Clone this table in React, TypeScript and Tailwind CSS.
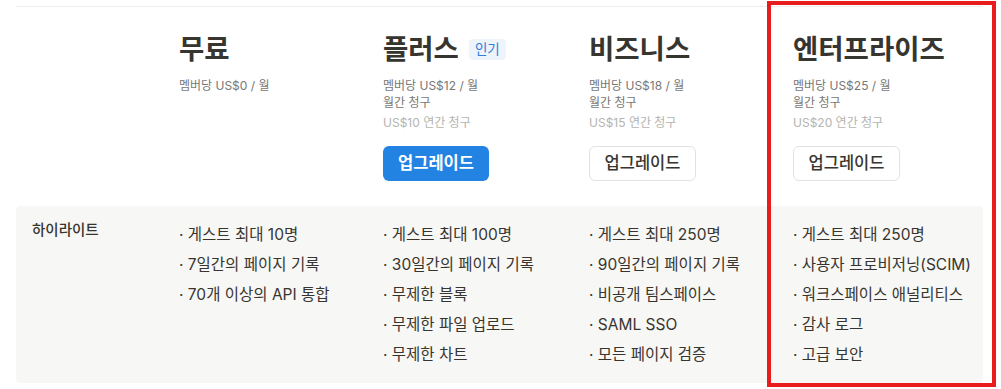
import React from "react";

type Plan = {
  name: string;
  badge?: string;
  price: string;
  monthly?: string;
  annual?: string;
  button?: "primary" | "outline";
  features: string[];
};

const plans: Plan[] = [
  {
    name: "무료",
    price: "멤버당 US$0 / 월",
    features: ["게스트 최대 10명", "7일간의 페이지 기록", "70개 이상의 API 통합"],
  },
  {
    name: "플러스",
    badge: "인기",
    price: "멤버당 US$12 / 월",
    monthly: "월간 청구",
    annual: "US$10 연간 청구",
    button: "primary",
    features: [
      "게스트 최대 100명",
      "30일간의 페이지 기록",
      "무제한 블록",
      "무제한 파일 업로드",
      "무제한 차트",
    ],
  },
  {
    name: "비즈니스",
    price: "멤버당 US$18 / 월",
    monthly: "월간 청구",
    annual: "US$15 연간 청구",
    button: "outline",
    features: [
      "게스트 최대 250명",
      "90일간의 페이지 기록",
      "비공개 팀스페이스",
      "SAML SSO",
      "모든 페이지 검증",
    ],
  },
  {
    name: "엔터프라이즈",
    price: "멤버당 US$25 / 월",
    monthly: "월간 청구",
    annual: "US$20 연간 청구",
    button: "outline",
    features: [
      "게스트 최대 250명",
      "사용자 프로비저닝(SCIM)",
      "워크스페이스 애널리티스",
      "감사 로그",
      "고급 보안",
    ],
  },
];

const cols = "grid grid-cols-[163px_204px_206px_204px_1fr]";

function PlanHeader({ plan }: { plan: Plan }) {
  return (
    <div className="flex flex-col">
      <div className="flex items-center gap-[10px]">
        <h2 className="text-[27.5px] leading-[32px] font-bold text-[#37352f]">{plan.name}</h2>
        {plan.badge && (
          <span className="mt-[1px] rounded-[4px] bg-[#edf4fc] px-[6px] text-[13.5px] leading-[21px] text-[#2f7fd9]">
            {plan.badge}
          </span>
        )}
      </div>
      <div className="mt-[12px] text-[12px] leading-[17px] text-[#787774]">
        <div>{plan.price}</div>
        {plan.monthly && <div>{plan.monthly}</div>}
      </div>
      {plan.annual && (
        <div className="mt-[3px] text-[12px] leading-[17px] text-[#b4b4b0]">{plan.annual}</div>
      )}
      {plan.button === "primary" && (
        <button className="mt-[15px] h-[35px] w-[106px] rounded-[6px] bg-[#2383e2] text-[16.5px] font-semibold text-white">
          업그레이드
        </button>
      )}
      {plan.button === "outline" && (
        <button className="mt-[15px] h-[35px] w-[107px] rounded-[6px] border border-[#e3e2e0] bg-white text-[16.5px] font-medium text-[#37352f]">
          업그레이드
        </button>
      )}
    </div>
  );
}

export default function App() {
  return (
    <div
      className="relative h-[389px] w-[1001px] overflow-hidden bg-white"
      style={{ fontFamily: "Inter, 'Noto Sans CJK KR', sans-serif" }}
    >
      <div className="ml-4 mr-[18px] pt-[6px]">
        <div className="h-px bg-[#ededec]" />
        <div className={`${cols} pt-[26px]`}>
          <div />
          {plans.map((p) => (
            <PlanHeader key={p.name} plan={p} />
          ))}
        </div>
        <div className={`${cols} mt-[25px] rounded-[4px] bg-[#f7f7f5] pt-[14px] pb-[13px]`}>
          <div className="pl-4 text-[14.5px] leading-[20px] font-medium text-[#37352f]">하이라이트</div>
          {plans.map((p) => (
            <ul key={p.name} className="text-[15.5px] leading-[30px] text-[#37352f]">
              {p.features.map((f) => (
                <li key={f}>· {f}</li>
              ))}
            </ul>
          ))}
        </div>
      </div>
      <div className="pointer-events-none absolute left-[767px] top-[1px] h-[386px] w-[229px] border-[4px] border-[#e81c1c]" />
    </div>
  );
}
